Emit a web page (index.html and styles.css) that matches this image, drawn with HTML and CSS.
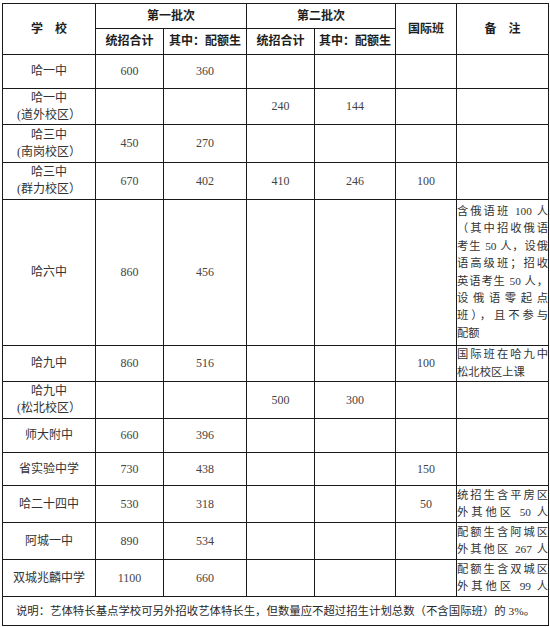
FILE: index.html
```html
<!DOCTYPE html>
<html lang="zh">
<head>
<meta charset="utf-8">
<title>招生计划</title>
<link rel="stylesheet" href="styles.css">
</head>
<body>
<table class="plan">
  <colgroup>
    <col class="c-school">
    <col class="c-a">
    <col class="c-b">
    <col class="c-c">
    <col class="c-d">
    <col class="c-intl">
    <col class="c-note">
  </colgroup>
  <thead>
    <tr class="h-top">
      <th rowspan="2">学　校</th>
      <th colspan="2">第一批次</th>
      <th colspan="2">第二批次</th>
      <th rowspan="2">国际班</th>
      <th rowspan="2">备　注</th>
    </tr>
    <tr class="h-sub">
      <th>统招合计</th>
      <th>其中：配额生</th>
      <th>统招合计</th>
      <th>其中：配额生</th>
    </tr>
  </thead>
  <tbody>
    <tr class="r34">
      <td class="school">哈一中</td><td class="num">600</td><td class="num">360</td><td></td><td></td><td></td><td></td>
    </tr>
    <tr class="r36">
      <td class="school">哈一中<br>(道外校区）</td><td></td><td></td><td class="num">240</td><td class="num">144</td><td></td><td></td>
    </tr>
    <tr class="r38">
      <td class="school">哈三中<br>(南岗校区）</td><td class="num">450</td><td class="num">270</td><td></td><td></td><td></td><td></td>
    </tr>
    <tr class="r37">
      <td class="school">哈三中<br>(群力校区）</td><td class="num">670</td><td class="num">402</td><td class="num">410</td><td class="num">246</td><td class="num">100</td><td></td>
    </tr>
    <tr class="r146">
      <td class="school">哈六中</td><td class="num">860</td><td class="num">456</td><td></td><td></td><td></td>
      <td class="note">
        <span class="ln">含俄语班 100 人</span>
        <span class="ln">（其中招收俄语</span>
        <span class="ln">考生 50 人，设俄</span>
        <span class="ln">语高级班；招收</span>
        <span class="ln">英语考生 50 人，</span>
        <span class="ln">设俄语零起点</span>
        <span class="ln">班），且不参与</span>
        <span class="ln last">配额</span>
      </td>
    </tr>
    <tr class="r36">
      <td class="school">哈九中</td><td class="num">860</td><td class="num">516</td><td></td><td></td><td class="num">100</td>
      <td class="note"><span class="ln">国际班在哈九中</span><span class="ln last">松北校区上课</span></td>
    </tr>
    <tr class="r37">
      <td class="school">哈九中<br>(松北校区）</td><td></td><td></td><td class="num">500</td><td class="num">300</td><td></td><td></td>
    </tr>
    <tr class="r34">
      <td class="school">师大附中</td><td class="num">660</td><td class="num">396</td><td></td><td></td><td></td><td></td>
    </tr>
    <tr class="r33">
      <td class="school">省实验中学</td><td class="num">730</td><td class="num">438</td><td></td><td></td><td class="num">150</td><td></td>
    </tr>
    <tr class="r37">
      <td class="school">哈二十四中</td><td class="num">530</td><td class="num">318</td><td></td><td></td><td class="num">50</td>
      <td class="note"><span class="ln">统招生含平房区</span><span class="ln">外其他区 50 人</span></td>
    </tr>
    <tr class="r37">
      <td class="school">阿城一中</td><td class="num">890</td><td class="num">534</td><td></td><td></td><td></td>
      <td class="note"><span class="ln">配额生含阿城区</span><span class="ln">外其他区 267 人</span></td>
    </tr>
    <tr class="r37">
      <td class="school">双城兆麟中学</td><td class="num">1100</td><td class="num">660</td><td></td><td></td><td></td>
      <td class="note"><span class="ln">配额生含双城区</span><span class="ln">外其他区 99 人</span></td>
    </tr>
  </tbody>
  <tfoot>
    <tr class="r29">
      <td colspan="7" class="foot">说明：艺体特长基点学校可另外招收艺体特长生，但数量应不超过招生计划总数（不含国际班）的 3%。</td>
    </tr>
  </tfoot>
</table>
</body>
</html>
```

FILE: styles.css
```css
html, body {
  margin: 0;
  padding: 0;
  background: #ffffff;
}

body {
  padding: 3px 2px 0 2px;
  font-family: "Liberation Serif", "Noto Sans CJK SC", serif;
  color: #333333;
}

.plan {
  width: 546px;
  border-collapse: collapse;
  table-layout: fixed;
  border: 1px solid #555555;
  font-size: 12px;
  line-height: 17px;
}

.c-school { width: 93px; }
.c-a { width: 68px; }
.c-b { width: 83px; }
.c-c { width: 68px; }
.c-d { width: 81px; }
.c-intl { width: 61px; }
.c-note { width: 92px; }

.plan th,
.plan td {
  border: 1px solid #1a1a1a;
  padding: 0;
  text-align: center;
  vertical-align: middle;
}

.plan th {
  font-weight: bold;
  color: #1e1e1e;
}

.h-top { height: 25px; }
.h-sub { height: 26px; }
.r29 { height: 29px; }
.r33 { height: 33px; }
.r34 { height: 34px; }
.r36 { height: 36px; }
.r37 { height: 37px; }
.r38 { height: 38px; }
.r146 { height: 146px; }

.school {
  color: #333333;
  padding-right: 4px;
}

.num {
  color: #444444;
}

.note {
  text-align: left;
  padding: 0 4px 0 5px;
  color: #333333;
  font-size: 11.3px;
  line-height: 17.4px;
}

.ln {
  display: block;
  white-space: nowrap;
  text-align: justify;
  text-align-last: justify;
}

.ln.last {
  text-align-last: left;
}

.foot {
  text-align: left;
  padding-left: 6px;
  color: #2a2a2a;
  font-size: 11.4px;
  white-space: nowrap;
}
```
